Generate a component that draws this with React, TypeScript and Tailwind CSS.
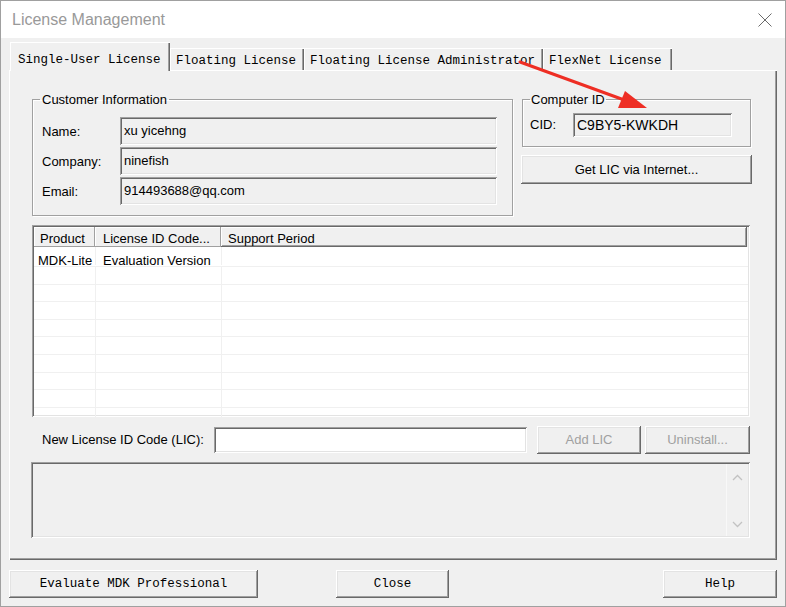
const raised =
  "shadow-[inset_-1px_-1px_#696969,inset_1px_1px_#ffffff,inset_-2px_-2px_#a0a0a0,inset_2px_2px_#e3e3e3]";
const sunken =
  "shadow-[inset_1px_1px_#a0a0a0,inset_-1px_-1px_#ffffff,inset_2px_2px_#696969,inset_-2px_-2px_#e3e3e3]";
const etched = "border border-[#a0a0a0] shadow-[inset_1px_1px_#ffffff,1px_1px_#ffffff]";
const mono = "font-['Liberation_Mono',monospace] text-[12.5px]";

function Tab({ label, width, active }: { label: string; width: string; active?: boolean }) {
  if (active) {
    return (
      <div
        className={`relative z-10 -mb-[1px] flex h-[29px] items-start pl-[8px] pt-[9px] bg-[#f0f0f0] shadow-[inset_1px_1px_#ffffff,inset_-1px_0_#696969,inset_-2px_0_#a0a0a0] ${width}`}
      >
        {label}
      </div>
    );
  }
  return (
    <div
      className={`flex h-[22px] items-center pl-[6px] pt-[5px] shadow-[inset_1px_1px_#ffffff,inset_-1px_0_#696969,inset_-2px_0_#a0a0a0] ${width}`}
    >
      {label}
    </div>
  );
}

function Chevron({ up }: { up?: boolean }) {
  return (
    <svg width="11" height="7" viewBox="0 0 11 7">
      <polyline
        points={up ? "1,6 5.5,1.5 10,6" : "1,1 5.5,5.5 10,1"}
        fill="none"
        stroke="#c2c2c2"
        strokeWidth="1.3"
      />
    </svg>
  );
}

const rows = Array.from({ length: 9 });

export default function App() {
  return (
    <div className="relative flex h-[607px] w-[786px] flex-col overflow-hidden border border-[#a0a0a0] bg-[#f0f0f0] font-['Liberation_Sans',Arial,sans-serif] text-[13px] text-black">
      {/* title bar */}
      <div className="flex h-[37px] shrink-0 items-center justify-between bg-white pl-[11px] pr-[13px]">
        <span className="text-[16px] text-[#999999]">License Management</span>
        <svg width="14" height="14" viewBox="0 0 14 14">
          <path d="M0.5 0.5L13.5 13.5M13.5 0.5L0.5 13.5" stroke="#6a6a6a" strokeWidth="1" />
        </svg>
      </div>

      <div className="flex flex-1 flex-col px-[8px] pt-[5px]">
        {/* tabs */}
        <div className={`flex h-[27px] items-end pl-[1px] ${mono}`}>
          <Tab label="Single-User License" width="w-[160px]" active />
          <Tab label="Floating License" width="w-[134px]" />
          <Tab label="Floating License Administrator" width="w-[239px]" />
          <Tab label="FlexNet License" width="w-[129px]" />
        </div>

        {/* panel */}
        <div className="flex h-[490px] flex-col pl-[23px] pt-[22px] shadow-[inset_1px_1px_#ffffff,inset_-1px_-1px_#696969,inset_-2px_-2px_#a0a0a0]">
          <div className="flex gap-[8px]">
            <fieldset className={`w-[481px] pb-[10px] ${etched}`}>
              <legend className="ml-[7px] px-[2px] leading-[15px]">Customer Information</legend>
              <div className="flex flex-col gap-[2px] pl-[9px] pt-[10px]">
                {[
                  ["Name:", "xu yicehng"],
                  ["Company:", "ninefish"],
                  ["Email:", "914493688@qq.com"],
                ].map(([k, v]) => (
                  <div key={k} className="flex items-center">
                    <span className="w-[78px] pt-[2px]">{k}</span>
                    <div className={`flex h-[28px] w-[377px] items-center pl-[4px] ${sunken}`}>{v}</div>
                  </div>
                ))}
              </div>
            </fieldset>

            <div className="flex w-[231px] flex-col">
              <fieldset className={`ml-[1px] w-[229px] pb-[9px] ${etched}`}>
                <legend className="ml-[7px] px-[1px] leading-[15px]">Computer ID</legend>
                <div className="flex items-center pl-[7px] pt-[6px]">
                  <span className="w-[43px]">CID:</span>
                  <div className={`flex h-[24px] w-[159px] items-center pl-[4px] text-[14px] ${sunken}`}>
                    C9BY5-KWKDH
                  </div>
                </div>
              </fieldset>
              <button className={`mt-[8px] h-[29px] w-[231px] bg-[#f0f0f0] ${raised}`}>
                Get LIC via Internet...
              </button>
            </div>
          </div>

          {/* list view */}
          <div className={`mt-[9px] flex h-[192px] w-[718px] flex-col overflow-hidden bg-white p-[2px] ${sunken}`}>
            <div className="flex h-[20px] shrink-0 bg-[#f0f0f0]">
              <div className="flex w-[61px] items-center pl-[6px] pt-[3px] shadow-[inset_-1px_-1px_#a0a0a0,inset_1px_1px_#ffffff]">
                Product
              </div>
              <div className="flex w-[126px] items-center pl-[8px] pt-[3px] shadow-[inset_-1px_-1px_#a0a0a0,inset_1px_1px_#ffffff]">
                License ID Code...
              </div>
              <div className="flex w-[526px] items-center pl-[7px] pt-[3px] shadow-[inset_-1px_-1px_#696969,inset_1px_1px_#ffffff,inset_-2px_-2px_#a0a0a0]">
                Support Period
              </div>
            </div>
            <div className="flex h-[20px] shrink-0 items-end border-b border-[#f0f0f0] pb-[1px]">
              <div className="h-full w-[62px] border-r border-[#f0f0f0] pl-[4px] pt-[4px]">MDK-Lite</div>
              <div className="h-full w-[126px] border-r border-[#f0f0f0] pl-[7px] pt-[4px]">Evaluation Version</div>
            </div>
            {rows.map((_, i) => (
              <div key={i} className="flex h-[17.6px] shrink-0 border-b border-[#f0f0f0]">
                <div className="h-full w-[62px] border-r border-[#f0f0f0]" />
                <div className="h-full w-[126px] border-r border-[#f0f0f0]" />
              </div>
            ))}
          </div>

          {/* new LIC row */}
          <div className="mt-[9px] flex h-[28px] items-center pl-[10px]">
            <span className="w-[172px]">New License ID Code (LIC):</span>
            <div className={`h-[26px] w-[313px] bg-white ${sunken}`} />
            <button className={`ml-[10px] h-[28px] w-[104px] bg-[#f0f0f0] text-[#a0a0a0] ${raised}`}>
              Add LIC
            </button>
            <button className={`ml-[4px] h-[28px] w-[105px] bg-[#f0f0f0] text-[#a0a0a0] ${raised}`}>
              Uninstall...
            </button>
          </div>

          {/* message box */}
          <div className={`-ml-[1px] mt-[8px] flex h-[76px] w-[719px] justify-end p-[2px] ${sunken}`}>
            <div className="flex w-[22px] flex-col items-center justify-between border-l border-[#f8f8f8] pb-[8px] pt-[10px]">
              <Chevron up />
              <Chevron />
            </div>
          </div>
        </div>

        {/* bottom buttons */}
        <div className={`mt-[10px] flex ${mono}`}>
          <button className={`h-[28px] w-[249px] bg-[#f0f0f0] ${raised}`}>Evaluate MDK Professional</button>
          <button className={`ml-[78px] h-[28px] w-[113px] bg-[#f0f0f0] ${raised}`}>Close</button>
          <button className={`ml-auto h-[28px] w-[114px] bg-[#f0f0f0] ${raised}`}>Help</button>
        </div>
      </div>

      {/* red annotation arrow */}
      <svg
        className="pointer-events-none absolute left-0 top-0"
        width="786"
        height="607"
        viewBox="0 0 786 607"
      >
        <line x1="519" y1="61" x2="626" y2="100" stroke="#ee2e24" strokeWidth="3" strokeLinecap="round" />
        <polygon points="646,107 617,107 624,90" fill="#ee2e24" />
      </svg>
    </div>
  );
}
